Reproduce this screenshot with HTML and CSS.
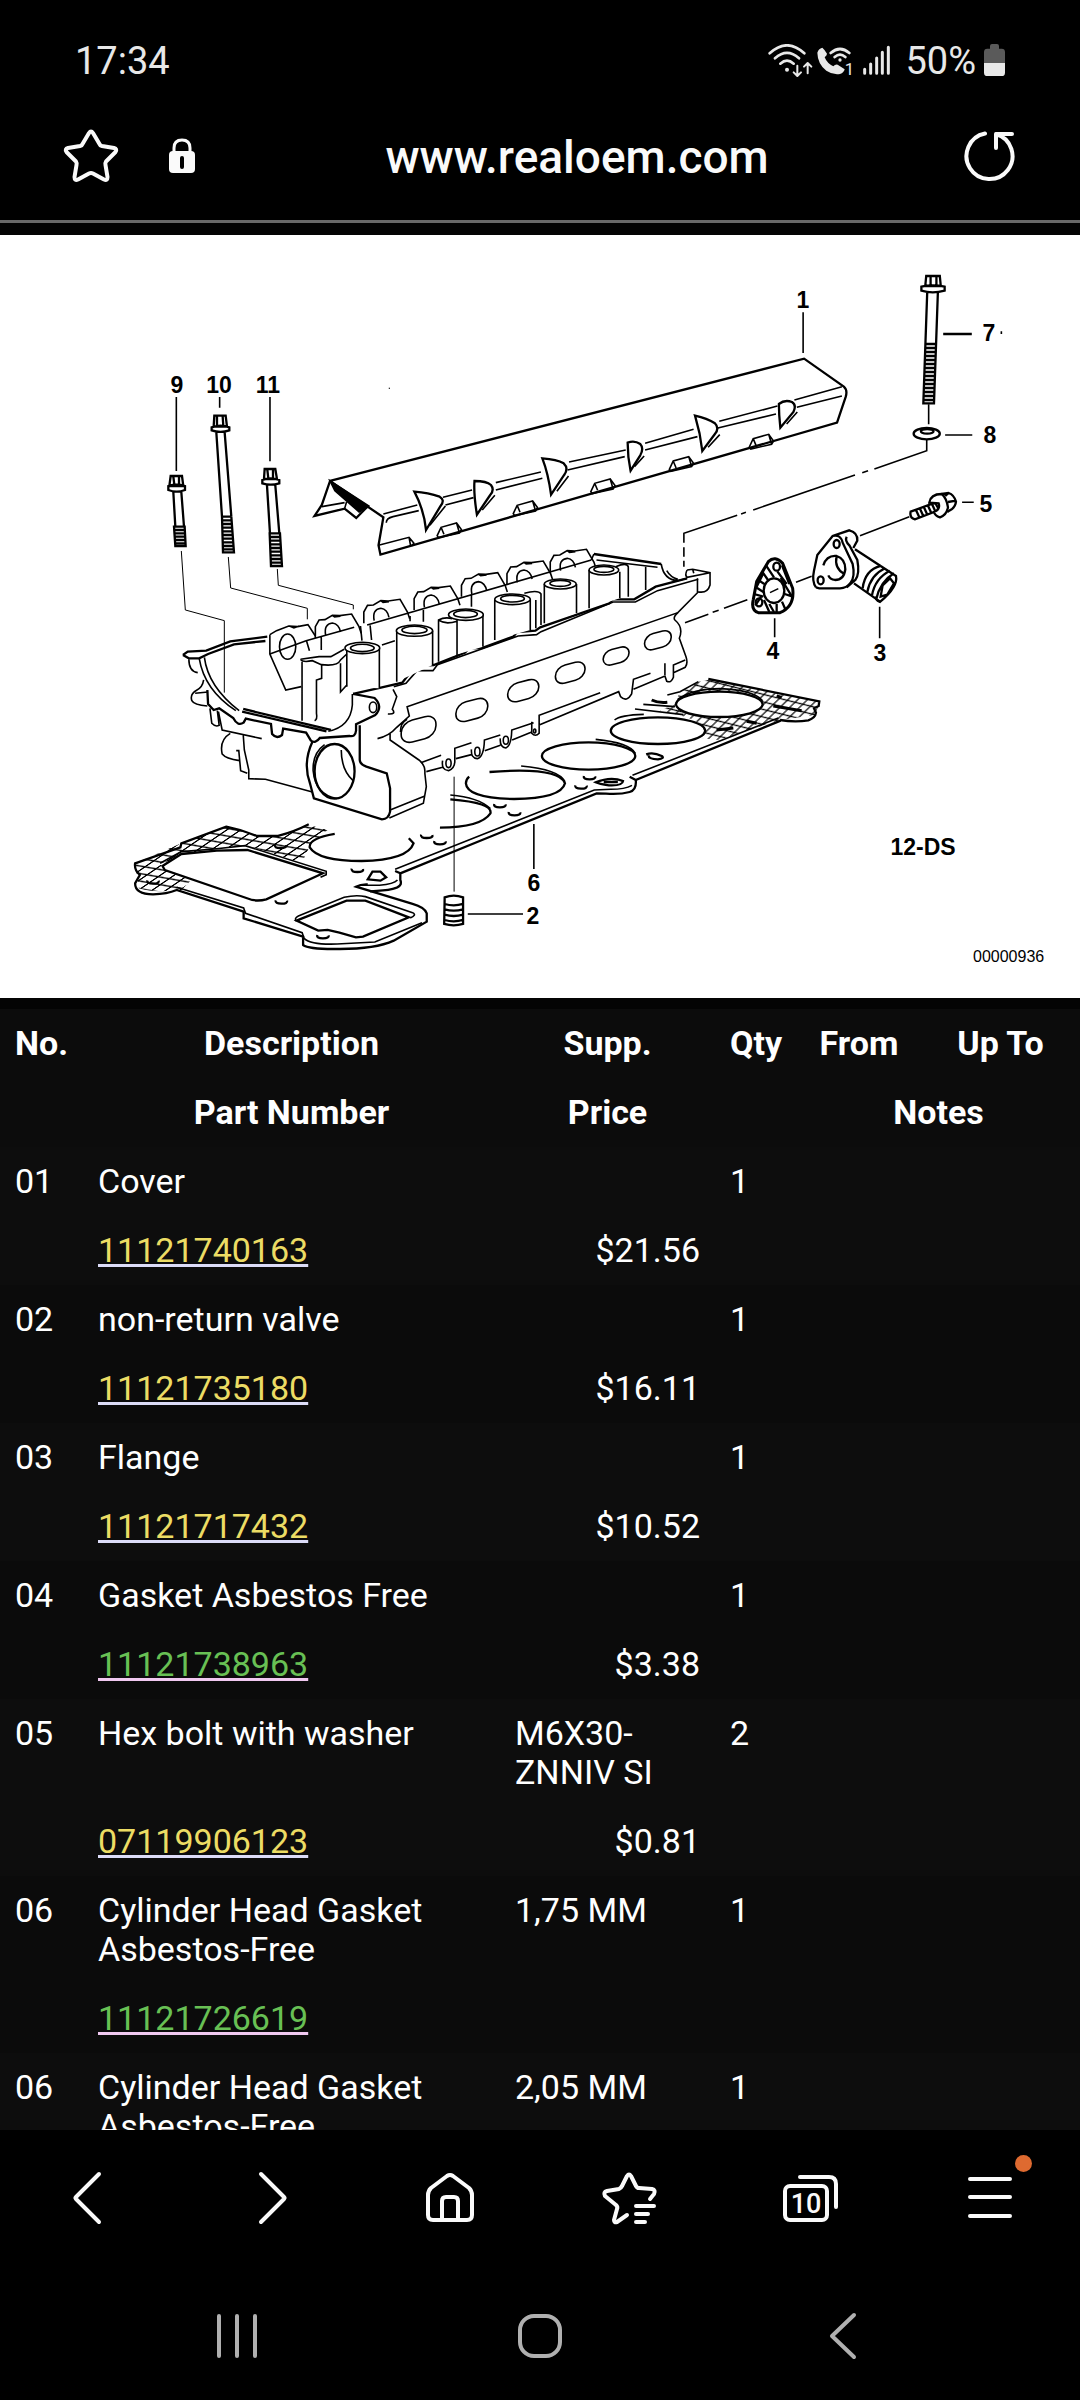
FILE: index.html
```html
<!DOCTYPE html>
<html lang="en">
<head>
    <meta charset="UTF-8">
    <meta name="viewport" content="width=device-width, initial-scale=1.0">
    <title>Cylinder Head - RealOEM</title>
    <link rel="stylesheet" href="styles.css">
</head>
<body>

<!-- Status bar -->
<div class="status-bar">
    <span class="clock">17:34</span>
    <div class="status-icons">
        <svg class="wifi" viewBox="86 72 135 102" aria-hidden="true">
            <path class="w8" d="M91 100Q143 52 195 100M107 115Q143 82 179 115M123 131Q143 113 163 131"/>
            <circle cx="143" cy="149" r="6"/>
            <path class="w5" d="M174 137V167M163 157L174 168L185 157M205 160V130M194 140L205 129L216 140"/>
        </svg>
        <svg class="call" viewBox="234 72 114 102" aria-hidden="true">
            <path class="solid" d="M235 98Q238 86 250 83Q258 90 264 101Q264 106 257 112Q264 130 283 139Q289 132 296 134L317 148Q315 158 303 162Q283 166 262 152Q236 132 235 98Z"/>
            <path class="w8" d="M275 99Q303 75 331 99M287 111Q303 97 319 111"/>
            <circle cx="303" cy="120" r="5"/>
            <text x="317" y="164">1</text>
        </svg>
        <svg class="signal" viewBox="372 72 81 102" aria-hidden="true">
            <path class="w9" d="M377 148V160M395 132V160M413 114V160M430 97V160M448 82V160"/>
        </svg>
        <span class="percent">50%</span>
        <svg class="battery" viewBox="732 72 63 102" aria-hidden="true">
            <path class="empty" d="M750 86V78Q750 72 756 72H771Q777 72 777 78V86H785Q795 86 795 96V130H732V96Q732 86 742 86Z"/>
            <path class="solid" d="M732 129H795V158Q795 168 785 168H742Q732 168 732 158Z"/>
        </svg>
    </div>
</div>

<!-- Address bar -->
<header class="address-bar">
    <button type="button" class="icon-button" aria-label="Bookmark">
        <svg class="star" viewBox="0 0 60 60">
            <path d="M28 7L21.500 18Q21 19.500 19 20L7 22Q3.500 23 5.500 26L15 35.500Q16 37 15.500 39L13.500 51Q13.500 55 17 53.500L28 47.500Q30 46.500 32 47.500L43 53.500Q46.500 55 46.500 51L44.500 39Q44 37 45 35.500L54.500 26Q56.500 23 53 22L41 20Q39 19.500 38.500 18L32 7Q30 4 28 7Z"/>
        </svg>
    </button>
    <svg class="lock" viewBox="0 0 26 36" aria-hidden="true">
        <path class="shackle" d="M5 15V10Q5 2 13 2T21 10V15"/>
        <rect y="13" width="26" height="22" rx="4"/>
        <path class="keyhole" d="M13 20V29"/>
    </svg>
    <input class="url" type="text" value="www.realoem.com" aria-label="Address">
    <button type="button" class="icon-button" aria-label="Reload">
        <svg class="reload" viewBox="0 0 52 52">
            <path d="M22 3.500A23 23 0 1 0 33 4M33 18V4H49"/>
        </svg>
    </button>
</header>

<main class="content">
    <svg class="diagram" viewBox="0 235 1080 763" role="img" aria-label="Cylinder head parts diagram">
        <defs>
            <pattern id="mesh" width="24" height="22" patternUnits="userSpaceOnUse" patternTransform="rotate(14) skewX(-32)">
                <path class="mesh-line" d="M0 11H24M12 0V22"/>
            </pattern>
            <path id="tab" d="M0 30L8 5L40 -8L50 12L46 22L3 36ZM40 -8L46 22M8 5L14 26"/>
            <path id="cap" d="M0 72V38L10 18L26 17L46 4L66 5L98 0L118 38L124 58M28 64Q22 30 46 27Q64 30 68 54M46 4L52 9L68 7"/>
            <path id="hole" class="bold" d="M-12 -4Q-14 6 0 6T12 -3"/>
        </defs>

        <!-- Head gasket (6), front part -->
        <g transform="translate(120 700) scale(0.4719 0.3333)">
            <path class="mesh" d="M32 490L130 430L225 380Q260 390 290 408H335L400 375L440 390L405 430L385 490L270 437L200 447L85 490L90 505L155 535L130 570Q70 580 40 565Z"/>
            <path class="bold" d="M400 373Q370 395 335 408H290Q260 390 225 380L130 430L128 442L32 490Q30 510 42 525L32 550Q32 583 70 583Q100 582 120 570L262 635V655L388 710V735Q400 748 460 747Q540 748 580 722L650 665V640Q645 622 620 612L500 560Q510 552 525 553"/>
            <path d="M120 562L262 624L266 640L386 698L390 715Q405 735 460 732L540 726L640 668"/>
            <path class="bold" d="M530 574Q560 573 578 567Q600 560 594 540V520L1010 280L1030 281Q1060 284 1080 276Q1095 270 1093 240L1400 62M583 513L594 520M1080 230L1093 240"/>
            <path d="M583 508L1005 270L1040 268Q1070 268 1085 256M1086 226L1395 54M508 556H550Q580 552 588 540"/>
            <path class="bold fill" d="M90 498L130 462L205 452L270 450L430 520L310 598Q295 604 280 600L95 510Z"/>
            <path d="M85 490L130 455L200 447L265 437L437 514V524L425 532"/>
            <path class="bold" d="M374 662L480 602L520 602L612 652L515 710L500 712L465 698L440 690L420 692Z"/>
            <path d="M374 664Q368 655 378 648L475 592Q500 584 520 590L620 638Q630 645 615 654"/>
            <path class="bold" d="M455 402Q400 415 402 442Q420 483 512 483Q610 480 622 430L612 415M700 298Q790 308 785 340Q765 382 678 383M783 216Q930 200 943 250Q935 296 835 297Q735 294 733 250Q733 238 740 230"/>
            <path d="M700 285Q760 292 785 326M850 198Q930 208 943 245M1008 118Q1080 128 1092 160"/>
            <ellipse class="bold" cx="993" cy="168" rx="99" ry="41"/>
            <ellipse class="bold" cx="1140" cy="92" rx="100" ry="40"/>
            <path d="M1048 60Q1060 45 1110 43"/>
            <use href="#hole" x="340" y="438"/>
            <use href="#hole" x="503" y="510"/>
            <use href="#hole" x="650" y="408"/>
            <use href="#hole" x="678" y="427"/>
            <use href="#hole" x="805" y="316"/>
            <use href="#hole" x="836" y="340"/>
            <use href="#hole" x="342" y="605"/>
            <use href="#hole" x="430" y="709"/>
            <use href="#hole" x="995" y="232"/>
            <use href="#hole" x="977" y="260"/>
            <use href="#hole" x="70" y="545"/>
            <path class="bold" d="M525 538L535 515H552L564 532L552 542ZM1115 163Q1130 155 1148 168Q1155 175 1140 178Q1120 178 1120 166M1008 247Q1040 228 1066 243Q1065 258 1036 256Q1015 252 1008 247ZM1025 246H1055"/>

            <!-- Non-return valve (2) -->
            <path class="bold" d="M688 592Q707 582 727 592V672Q707 680 687 672ZM688 612Q707 620 727 612M688 628Q707 636 727 628M688 644Q707 652 727 644M688 660Q707 668 727 660"/>
            <path class="thin" d="M708 230V575"/>
            <path d="M877 372V507M737 642H854"/>
        </g>

        <!-- Head gasket, rear part -->
        <g transform="translate(580 660) scale(0.3333)">
            <path class="mesh" d="M385 60L720 125L705 165L600 180L415 240L365 235L375 205Q340 165 235 155L285 130L300 95L355 65Z"/>
            <ellipse class="bold fill" cx="418" cy="133" rx="130" ry="38"/>
            <path class="bold" d="M385 57L718 124L716 138L702 145L708 158Q706 174 685 181Q645 188 600 180"/>
            <path d="M293 118Q340 86 420 86Q520 90 548 122M190 133L285 140M165 147L310 164M355 65L300 95L262 105"/>
            <path class="heavy" d="M215 120Q235 130 262 127M580 138L665 152M410 210L460 204M500 184L530 190M590 108L605 112"/>
        </g>

        <!-- Cylinder head -->
        <g transform="translate(160 540) scale(0.3699 0.3333)">
            <path class="body" d="M62 345L190 304L290 290L297 285L420 225L1055 40L1173 40L1355 72L1420 112L1487 98L1480 160L1400 218L1405 295L1425 360L1380 425L1260 480L1025 570L780 690L718 700L712 790L610 838L415 775L240 715L168 640L168 572L85 480Z"/>

            <use href="#cap" x="420" y="222"/>
            <use href="#cap" x="551" y="178"/>
            <use href="#cap" x="687" y="138"/>
            <use href="#cap" x="815" y="98"/>
            <use href="#cap" x="938" y="63"/>
            <use href="#cap" x="1055" y="28"/>
            <path d="M297 284L315 272L348 258L372 260L400 254L420 288M297 284V342L340 450L382 440M350 258L362 264L376 258"/>
            <ellipse cx="345" cy="320" rx="22" ry="38"/>
            <path d="M1166 60L560 255M525 262L395 302L297 342M542 258L546 302M568 256L572 300M396 302L404 332M436 290V330M676 228V244M712 210V245M842 165V200M600 315L635 302"/>

            <!-- Rim -->
            <path class="bold" d="M62 345L75 335L125 332L190 304L290 290M62 345L78 355H106L130 342L200 313L285 303M1173 42L1355 72"/>
            <path d="M78 358Q78 395 102 398M106 355Q120 450 205 512M120 352Q130 440 214 512M1180 60L1345 82M1173 42L1166 60M1355 72Q1362 120 1400 122L1425 115M1370 92Q1380 112 1400 118"/>
            <path class="bold" d="M225 507L462 570M222 515L450 574"/>
            <path d="M1425 90L1440 88L1487 98V135Q1480 162 1453 155V115M1425 90Q1418 105 1425 112L1487 98M1440 88L1443 100"/>
            <path class="bold" d="M1425 115L1340 140L1282 178L1225 178L1215 190L1028 262L1015 272L965 276L955 290L870 324L835 325L825 338L740 375L690 378L655 428L600 442L522 462"/>
            <path d="M1455 118L1345 152L1285 186H1225L1030 275L1018 284L968 288L750 374L738 392L695 392L665 430L632 440"/>

            <!-- Valve bores -->
            <path class="body" d="M505 324V442L593 445V324ZM640 272V425L737 375V272ZM782 224V350L873 320V224ZM905 178V300L1001 270V178ZM1039 132V250L1126 220V132ZM1160 90V205L1243 175V90Z"/>
            <path d="M505 440V326M593 445V324M640 425V272M737 375V272M753 365V240Q770 230 790 236M803 350V238M873 320V224M753 240Q770 255 803 244M905 300V178M1001 270V178M985 160Q1022 148 1030 162V255M1016 180V265M1039 250V132M1126 220V132M1160 205V90M1243 175V95M1232 80Q1262 66 1266 80V170M1313 80V150"/>
            <ellipse class="fill" cx="547" cy="324" rx="47" ry="17"/>
            <ellipse class="fill" cx="547" cy="324" rx="32" ry="11"/>
            <ellipse class="fill" cx="688" cy="272" rx="49" ry="17"/>
            <ellipse class="fill" cx="688" cy="270" rx="34" ry="11"/>
            <ellipse class="fill" cx="827" cy="224" rx="47" ry="17"/>
            <ellipse class="fill" cx="826" cy="222" rx="32" ry="11"/>
            <ellipse class="fill" cx="953" cy="178" rx="48" ry="16"/>
            <ellipse class="fill" cx="953" cy="176" rx="32" ry="10"/>
            <ellipse class="fill" cx="1082" cy="132" rx="43" ry="15"/>
            <ellipse class="fill" cx="1082" cy="130" rx="28" ry="9"/>
            <ellipse class="fill" cx="1200" cy="90" rx="40" ry="15"/>
            <ellipse class="fill" cx="1200" cy="88" rx="27" ry="9"/>
            <path d="M380 358L430 350H462L498 328M380 358Q385 368 412 362L436 374Q480 380 488 360L505 342M384 365V542M437 375V415L423 420V520Q426 538 418 542M488 370V456L505 435M520 462V495Q515 560 455 574"/>

            <!-- Front face -->
            <path class="bold" d="M522 462L580 474Q604 500 582 525L530 553V572Q528 592 512 588L432 594Q420 612 408 602L395 578L333 566L330 585Q315 598 303 582L300 552L232 536L226 548Q210 560 198 534L160 505L145 510L130 492L128 450"/>
            <ellipse cx="576" cy="502" rx="10" ry="16"/>
            <path d="M118 420Q115 442 100 450Q80 462 86 482Q92 495 128 498M95 460L130 456M135 505L140 550Q150 562 160 556L155 512M158 515L168 570L275 596M190 580Q160 600 168 642Q178 656 215 662M225 585L228 630L240 690V716L285 718L412 756M206 632H213L218 692L236 700"/>
            <ellipse class="bold" cx="472" cy="694" rx="54" ry="82"/>
            <path d="M445 614Q412 640 414 692Q420 764 478 776M490 630Q490 690 522 722"/>
            <path class="bold" d="M412 605Q385 670 406 732L416 775L600 838Q618 838 622 815V745L613 700L558 680Q540 672 540 660V556"/>
            <path d="M622 580V600L700 660Q718 676 716 700L720 740L712 790L620 834M622 810L716 768M588 596Q620 588 640 562L674 528L668 500L1400 218L1455 156M616 522Q640 524 628 508L640 470L630 448M650 576Q650 548 668 538"/>

            <!-- Exhaust ports -->
            <rect transform="translate(699 568) skewY(-16)" x="-47" y="-33" width="94" height="66" rx="30"/>
            <rect transform="translate(843 510) skewY(-16)" x="-43" y="-29" width="86" height="58" rx="27"/>
            <rect transform="translate(982 452) skewY(-16)" x="-42" y="-28" width="84" height="56" rx="27"/>
            <rect transform="translate(1109 398) skewY(-16)" x="-40" y="-27" width="80" height="54" rx="26"/>
            <rect transform="translate(1233 348) skewY(-16)" x="-35" y="-23" width="70" height="46" rx="23"/>
            <rect transform="translate(1346 301) skewY(-16)" x="-36" y="-24" width="72" height="48" rx="23"/>

            <!-- Lower flange -->
            <path d="M705 668L760 646M720 695L764 682M764 662Q760 690 780 692Q798 685 797 660V625L842 608M800 656L842 644M842 628Q840 655 858 656Q876 650 877 600L920 585M878 632L920 616M920 595Q918 622 935 624Q950 618 951 570L1010 548M952 600L1005 576M1005 545V580Q1015 592 1025 580V526L1190 458M1025 555L1240 455L1245 470Q1262 488 1275 462L1280 418L1326 400M1280 448L1365 408L1370 424Q1382 430 1388 412V375L1420 360M1365 370V405M1388 398L1420 382Q1428 370 1422 350L1404 295Q1416 262 1392 240Q1386 232 1400 218"/>
            <ellipse cx="780" cy="670" rx="7" ry="13"/>
            <ellipse cx="858" cy="635" rx="7" ry="13"/>
            <ellipse cx="935" cy="601" rx="7" ry="12"/>
            <ellipse cx="1013" cy="573" rx="3" ry="6"/>
        </g>

        <!-- Head bolts (9, 10, 11) -->
        <g transform="translate(120 340) scale(0.3333)">
            <path d="M169 171V393M299 171V203M450 171V364"/>
            <path class="bold" d="M152 408H186L190 438H148ZM160 410L163 434M177 410V434M145 438Q170 430 195 438V450Q170 460 145 450ZM160 456L166 560M184 456L192 560M162 560H194L197 618H166ZM163 570H194M163 580H195M164 590H195M164 600H196M165 610H197"/>
            <path class="bold" d="M283 227H317L321 260H281ZM291 229V258M308 229L310 258M275 262Q302 252 328 262V271Q302 280 275 271ZM289 277L306 530M314 277L334 530M306 530H334L342 637H309ZM306 541H335M307 552H336M307 563H337M307 574H338M308 585H339M308 596H340M308 607H341M309 618H341M309 628H342"/>
            <path class="bold" d="M434 387H466L471 417H432ZM442 389L445 415M459 389V415M427 420Q452 411 478 420V430Q452 438 427 430ZM441 436L450 580M466 436L478 580M449 580H480L486 678H453ZM450 591H481M450 602H481M451 613H482M451 624H483M452 635H484M452 646H484M452 657H485M453 668H486"/>
            <path class="thin" d="M184 633L196 810L313 842V1058M325 651L332 744L562 805V838M472 687L475 736L700 795V808M808 143V147"/>
        </g>

        <!-- Cover (1), bolt (7) and washer (8) -->
        <g transform="translate(300 260) scale(0.4847 0.3333)">
            <path class="bold" d="M62 663L1040 296L1122 380Q1130 390 1126 410L1108 488L166 884L162 856L172 772L62 663L45 735L30 768L92 746L116 774L138 742"/>
            <path class="ink" d="M62 663L142 738L122 756L72 692Z"/>
            <path d="M45 740L92 728M92 746L96 726M172 762L242 735M295 712L355 690M404 668L497 636M555 606L672 570M712 550L812 508M865 484L985 438M1020 420L1118 380M178 788Q178 775 192 770L245 752M300 735L358 713M404 690L500 655M552 630L670 590M712 570L820 530M862 504L982 462M1025 442L1118 408M162 856L225 832L235 850L230 858M225 832L228 856"/>
            <path class="bold" d="M236 695Q265 698 288 710Q300 720 290 738L260 810Q256 750 236 695ZM360 663Q385 663 394 675Q402 690 392 706L365 764Q358 700 360 663ZM500 595Q530 598 544 610Q555 625 545 645L518 704Q512 640 500 595ZM676 548Q690 540 702 552Q710 565 702 586L682 632Q676 590 676 548ZM815 467Q840 475 856 490Q866 505 856 522L830 573Q826 520 815 467ZM988 432Q1000 418 1015 426Q1025 435 1018 456L991 503Q988 465 988 432Z"/>
            <path d="M300 738L268 796M402 706L376 750M554 648L530 694M710 588L690 620M866 524L842 562M1026 456L1004 492"/>
            <use href="#tab" x="283" y="797"/>
            <use href="#tab" x="440" y="731"/>
            <use href="#tab" x="600" y="665"/>
            <use href="#tab" x="762" y="598"/>
            <use href="#tab" x="927" y="531"/>
            <path d="M1038 157V279"/>
            <path class="bold" d="M1292 48H1320L1322 78H1290ZM1301 46V76M1313 46V76M1282 80Q1305 72 1330 80V92Q1305 102 1282 92ZM1294 98L1286 430H1308L1316 98M1291 252H1312M1291 264H1312M1290 276H1312M1290 288H1311M1290 300H1311M1289 312H1311M1289 324H1311M1289 336H1310M1288 348H1310M1288 360H1310M1288 372H1309M1287 384H1309M1287 396H1309M1287 408H1308M1286 420H1308M1327 222H1386"/>
            <ellipse class="bold" cx="1293" cy="521" rx="27" ry="17"/>
            <ellipse class="bold" cx="1294" cy="514" rx="13" ry="7"/>
            <path d="M1297 433V493M1331 525H1387M1366 727H1390M1447 214V222"/>
            <path d="M1293 540V572L1185 627M1172 632L1160 638M1145 645L935 750M920 757L910 762M902 766L792 820V848M792 862V890M792 902V920"/>
        </g>

        <!-- Flange (3), gasket (4) and hex bolt (5) -->
        <g transform="translate(680 420) scale(0.3333)">
            <path class="bold" d="M692 275L765 248L778 270L705 298Q688 294 692 275ZM708 270L718 292M720 266L730 288M732 262L742 284M744 257L754 279M756 252L766 274"/>
            <path class="bold fill" d="M748 248Q752 222 785 222Q800 235 804 262Q800 285 780 292Q765 288 762 276Q782 268 776 250Z"/>
            <path class="bold" d="M785 222L806 219Q822 224 828 245Q826 264 808 272L802 276M796 228L806 219M804 246L828 242"/>
            <path d="M540 347L688 290M348 487L395 469M270 518L295 506M15 608L85 583M98 577L116 571M132 565L202 539M599 560V655M284 595V652"/>
            <path class="bold" d="M408 502Q395 484 402 452L412 405L458 348L508 331Q534 338 532 362L520 384M458 348Q482 342 488 368L518 432Q526 470 512 488Q500 505 480 505H418L408 502M500 350Q494 362 508 376L532 420Q540 462 526 480L500 502M525 388L602 438M522 490L600 545"/>
            <ellipse class="bold" cx="470" cy="372" rx="9" ry="12"/>
            <ellipse class="bold" cx="422" cy="481" rx="9" ry="12"/>
            <path class="bold" d="M430 436Q440 405 470 408Q496 416 496 448Q492 480 465 480Q450 478 445 466M470 408Q462 445 493 462"/>
            <path class="bold" d="M602 438Q555 450 548 505M615 445Q572 465 562 516M630 452Q585 475 576 526M642 460Q600 485 588 540M602 438L648 468Q655 500 600 546Q585 540 588 530M608 496L630 475L642 490L622 524L602 530Z"/>
            <path class="heavy" d="M265 425Q285 405 308 430L338 505Q345 560 300 578H235Q212 570 220 538L230 485Z"/>
            <ellipse class="bold" cx="282" cy="512" rx="31" ry="37"/>
            <ellipse class="bold" cx="290" cy="440" rx="10" ry="12"/>
            <ellipse class="bold" cx="237" cy="547" rx="10" ry="12"/>
            <path class="bold" d="M258 436L282 472M246 454L264 480M232 478L256 494M250 460L230 500M228 502L250 516M222 522L250 530M246 526L226 556M252 540L268 576M268 552L282 576M290 552V576M306 545L316 568M314 522L338 530M302 474L336 530M292 454L320 492M306 436L328 492"/>
        </g>

        <g class="labels">
            <text x="803" y="308">1</text>
            <text x="989" y="341">7</text>
            <text x="990" y="443">8</text>
            <text x="986" y="512">5</text>
            <text x="773" y="659">4</text>
            <text x="880" y="661">3</text>
            <text x="177" y="393">9</text>
            <text x="219" y="393">10</text>
            <text x="268" y="393">11</text>
            <text x="534" y="891">6</text>
            <text x="533" y="924">2</text>
            <text x="923" y="855">12-DS</text>
        </g>
        <text class="drawing-number" x="973" y="962">00000936</text>
    </svg>

    <table class="parts">
        <colgroup>
            <col class="col-no">
            <col class="col-desc">
            <col class="col-supp">
            <col class="col-qty">
            <col class="col-from">
            <col class="col-upto">
        </colgroup>
        <thead>
            <tr><th>No.</th><th>Description</th><th>Supp.</th><th>Qty</th><th>From</th><th>Up To</th></tr>
            <tr><th></th><th>Part Number</th><th>Price</th><th></th><th colspan="2">Notes</th></tr>
        </thead>
        <tbody>
            <tr><td>01</td><td>Cover</td><td></td><td>1</td><td></td><td></td></tr>
            <tr><td></td><td><a href="#11121740163">11121740163</a></td><td class="price">$21.56</td><td></td><td colspan="2"></td></tr>
        </tbody>
        <tbody>
            <tr><td>02</td><td>non-return valve</td><td></td><td>1</td><td></td><td></td></tr>
            <tr><td></td><td><a href="#11121735180">11121735180</a></td><td class="price">$16.11</td><td></td><td colspan="2"></td></tr>
        </tbody>
        <tbody>
            <tr><td>03</td><td>Flange</td><td></td><td>1</td><td></td><td></td></tr>
            <tr><td></td><td><a href="#11121717432">11121717432</a></td><td class="price">$10.52</td><td></td><td colspan="2"></td></tr>
        </tbody>
        <tbody>
            <tr><td>04</td><td>Gasket Asbestos Free</td><td></td><td>1</td><td></td><td></td></tr>
            <tr><td></td><td><a class="seen" href="#11121738963">11121738963</a></td><td class="price">$3.38</td><td></td><td colspan="2"></td></tr>
        </tbody>
        <tbody>
            <tr><td>05</td><td>Hex bolt with washer</td><td>M6X30-ZNNIV SI</td><td>2</td><td></td><td></td></tr>
            <tr><td></td><td><a href="#07119906123">07119906123</a></td><td class="price">$0.81</td><td></td><td colspan="2"></td></tr>
        </tbody>
        <tbody>
            <tr><td>06</td><td>Cylinder Head Gasket Asbestos-Free</td><td>1,75 MM</td><td>1</td><td></td><td></td></tr>
            <tr><td></td><td><a class="seen" href="#11121726619">11121726619</a></td><td class="price"></td><td></td><td colspan="2"></td></tr>
        </tbody>
        <tbody>
            <tr><td>06</td><td>Cylinder Head Gasket Asbestos-Free</td><td>2,05 MM</td><td>1</td><td></td><td></td></tr>
        </tbody>
    </table>
</main>

<!-- Browser toolbar -->
<nav class="toolbar">
    <button type="button" aria-label="Back">
        <svg viewBox="0 0 72 72"><path d="M45 12L22 35Q21 36 22 37L45 60"/></svg>
    </button>
    <button type="button" aria-label="Forward">
        <svg viewBox="0 0 72 72"><path d="M27 12L50 35Q51 36 50 37L27 60"/></svg>
    </button>
    <button type="button" aria-label="Home">
        <svg viewBox="0 0 72 72"><path d="M14 33Q14 29 17 26L33 14Q36 12 39 14L55 26Q58 29 58 33V53Q58 58 53 58H19Q14 58 14 53ZM28 57V39Q28 35 32 35H40Q44 35 44 39V57"/></svg>
    </button>
    <button type="button" aria-label="Bookmarks">
        <svg viewBox="0 0 72 72"><path d="M56 37L60 32Q62 28 58 27L45 26Q43 26 42 24L37 14Q35 11 33 14L28 24Q27 26 25 27L13 29Q9 30 11 34L22 43Q24 45 23 47L20 58Q20 61 23 60L33 53M42 44H60M42 52H54M42 60H51"/></svg>
    </button>
    <button type="button" aria-label="Tabs">
        <svg viewBox="0 0 72 72"><path d="M26 15H55Q62 15 62 22V45"/><rect x="11" y="24" width="42" height="34" rx="5"/><text x="32" y="51">10</text></svg>
    </button>
    <button type="button" aria-label="Menu">
        <svg viewBox="0 0 72 72"><path d="M16 17H56M16 35H56M16 54H56"/></svg>
        <span class="badge"></span>
    </button>
</nav>

<!-- System navigation -->
<nav class="system-nav">
    <button type="button" aria-label="Recent apps">
        <svg viewBox="0 0 48 48"><path d="M6 4V44M24 4V44M42 4V44"/></svg>
    </button>
    <button type="button" aria-label="Home screen">
        <svg viewBox="0 0 48 48"><rect x="4" y="4" width="40" height="40" rx="14"/></svg>
    </button>
    <button type="button" aria-label="System back">
        <svg viewBox="0 0 48 48"><path d="M35 3L13 24L35 45"/></svg>
    </button>
</nav>

</body>
</html>
```
FILE: styles.css
```css
* {
    box-sizing: border-box;
}
body {
    font-family: Roboto, "Noto Sans", sans-serif;
    margin: 0;
    height: 100vh;
    display: flex;
    flex-direction: column;
    background-color: #000;
    color: #fff;
}
button {
    padding: 0;
    background: none;
    border: none;
    color: inherit;
    cursor: pointer;
}
svg {
    display: block;
    fill: none;
    stroke: #fafafa;
    stroke-width: 4;
    stroke-linecap: round;
    stroke-linejoin: round;
}

/* Status bar */
.status-bar {
    flex: none;
    height: 120px;
    padding: 2px 75px 0;
    display: flex;
    align-items: center;
    justify-content: space-between;
    font-size: 38px;
    color: #e8e8e8;
}
.status-icons {
    display: flex;
    align-items: center;
}
.status-icons svg {
    height: 34px;
    stroke: #e8e8e8;
}
.status-icons circle, .status-icons text, .status-icons .solid {
    fill: #e8e8e8;
    stroke: none;
}
.status-icons text {
    font-size: 50px;
}
.status-icons .w5 { stroke-width: 6; }
.status-icons .w8 { stroke-width: 8; }
.status-icons .w9 { stroke-width: 9; }
.wifi {
    width: 45px;
    margin-right: 4px;
}
.call {
    width: 38px;
    margin-right: 8px;
}
.signal {
    width: 27px;
    margin-right: 15px;
}
.battery {
    width: 21px;
    margin-left: 8px;
}
.battery .empty {
    fill: #5a5a5a;
    stroke: none;
}

/* Address bar */
.address-bar {
    flex: none;
    height: 103px;
    padding: 0 65px 28px 61px;
    display: flex;
    align-items: center;
    border-bottom: 3px solid #6a6a6a;
}
.star {
    width: 60px;
    height: 60px;
}
.lock {
    width: 26px;
    height: 36px;
    margin-left: 48px;
}
.lock rect {
    fill: #fafafa;
    stroke: none;
}
.lock .shackle {
    stroke-width: 3;
}
.lock .keyhole {
    stroke: #000;
}
.url {
    flex: 1;
    min-width: 0;
    padding: 2px 4px 0 0;
    background: none;
    border: none;
    color: #fafafa;
    font-family: inherit;
    font-size: 46px;
    font-weight: 500;
    text-align: center;
}
.reload {
    width: 52px;
    height: 52px;
}

/* Page content */
.content {
    flex: 1;
    min-height: 0;
    padding-top: 12px;
    overflow: hidden;
    background-color: #040404;
}
.diagram {
    width: 100%;
    margin-bottom: 11px;
    background-color: #fff;
    stroke: #000;
    stroke-width: 1.6;
    stroke-linejoin: miter;
    stroke-linecap: butt;
}
.diagram path, .diagram ellipse, .diagram rect {
    vector-effect: non-scaling-stroke;
}
.diagram .thin { stroke-width: 1; }
.diagram .bold { stroke-width: 2.3; }
.diagram .heavy { stroke-width: 3; }
.diagram .fill { fill: #fff; }
.diagram .ink { fill: #000; }
.diagram .body {
    fill: #fff;
    stroke: none;
}
.diagram .mesh {
    fill: url(#mesh);
    stroke: none;
}
.diagram .mesh-line {
    stroke: #000;
    stroke-width: 4;
    vector-effect: none;
}
.diagram text {
    font-family: "Liberation Sans", Arial, sans-serif;
    fill: #000;
    stroke: none;
}
.labels text {
    font-size: 23px;
    font-weight: bold;
    text-anchor: middle;
}
.drawing-number {
    font-size: 16px;
}

/* Parts table */
.parts {
    width: 100%;
    table-layout: fixed;
    border-collapse: collapse;
    background-color: #0c0c0c;
    font-size: 34px;
    line-height: 39px;
}
.col-no { width: 83px; }
.col-desc { width: 417px; }
.col-supp { width: 215px; }
.col-qty { width: 82px; }
.col-from { width: 124px; }
.col-upto { width: 159px; }
.parts th, .parts td {
    height: 69px;
    padding: 15px;
    vertical-align: top;
    text-align: left;
}
.parts th {
    text-align: center;
    white-space: nowrap;
}
.parts tbody:nth-of-type(odd) {
    background-color: #0d0d0d;
}
.parts tbody:nth-of-type(even) {
    background-color: #0b0b0b;
}
.parts .price {
    text-align: right;
}
.parts a {
    color: #ecdc64;
    text-decoration: underline;
    text-decoration-color: #dcdcf8;
    text-decoration-thickness: 3px;
    text-underline-offset: 2px;
    text-decoration-skip-ink: none;
}
.parts a.seen {
    color: #68c054;
    text-decoration-color: #f0c8f0;
}

/* Bottom bars */
.toolbar, .system-nav {
    flex: none;
    display: flex;
    align-items: center;
}
.toolbar {
    height: 136px;
}
.toolbar button, .system-nav button {
    flex: 1;
    display: flex;
    justify-content: center;
    position: relative;
}
.toolbar svg {
    width: 72px;
    height: 72px;
}
.toolbar text {
    fill: #fafafa;
    stroke: none;
    font-family: Roboto, sans-serif;
    font-size: 27px;
    font-weight: 500;
    text-anchor: middle;
}
.badge {
    position: absolute;
    top: -7px;
    right: 48px;
    width: 17px;
    height: 17px;
    border-radius: 50%;
    background-color: #de6a30;
}
.system-nav {
    height: 134px;
    padding: 6px 86px 0;
}
.system-nav svg {
    width: 48px;
    height: 48px;
    stroke: #b0b0b0;
}
```
